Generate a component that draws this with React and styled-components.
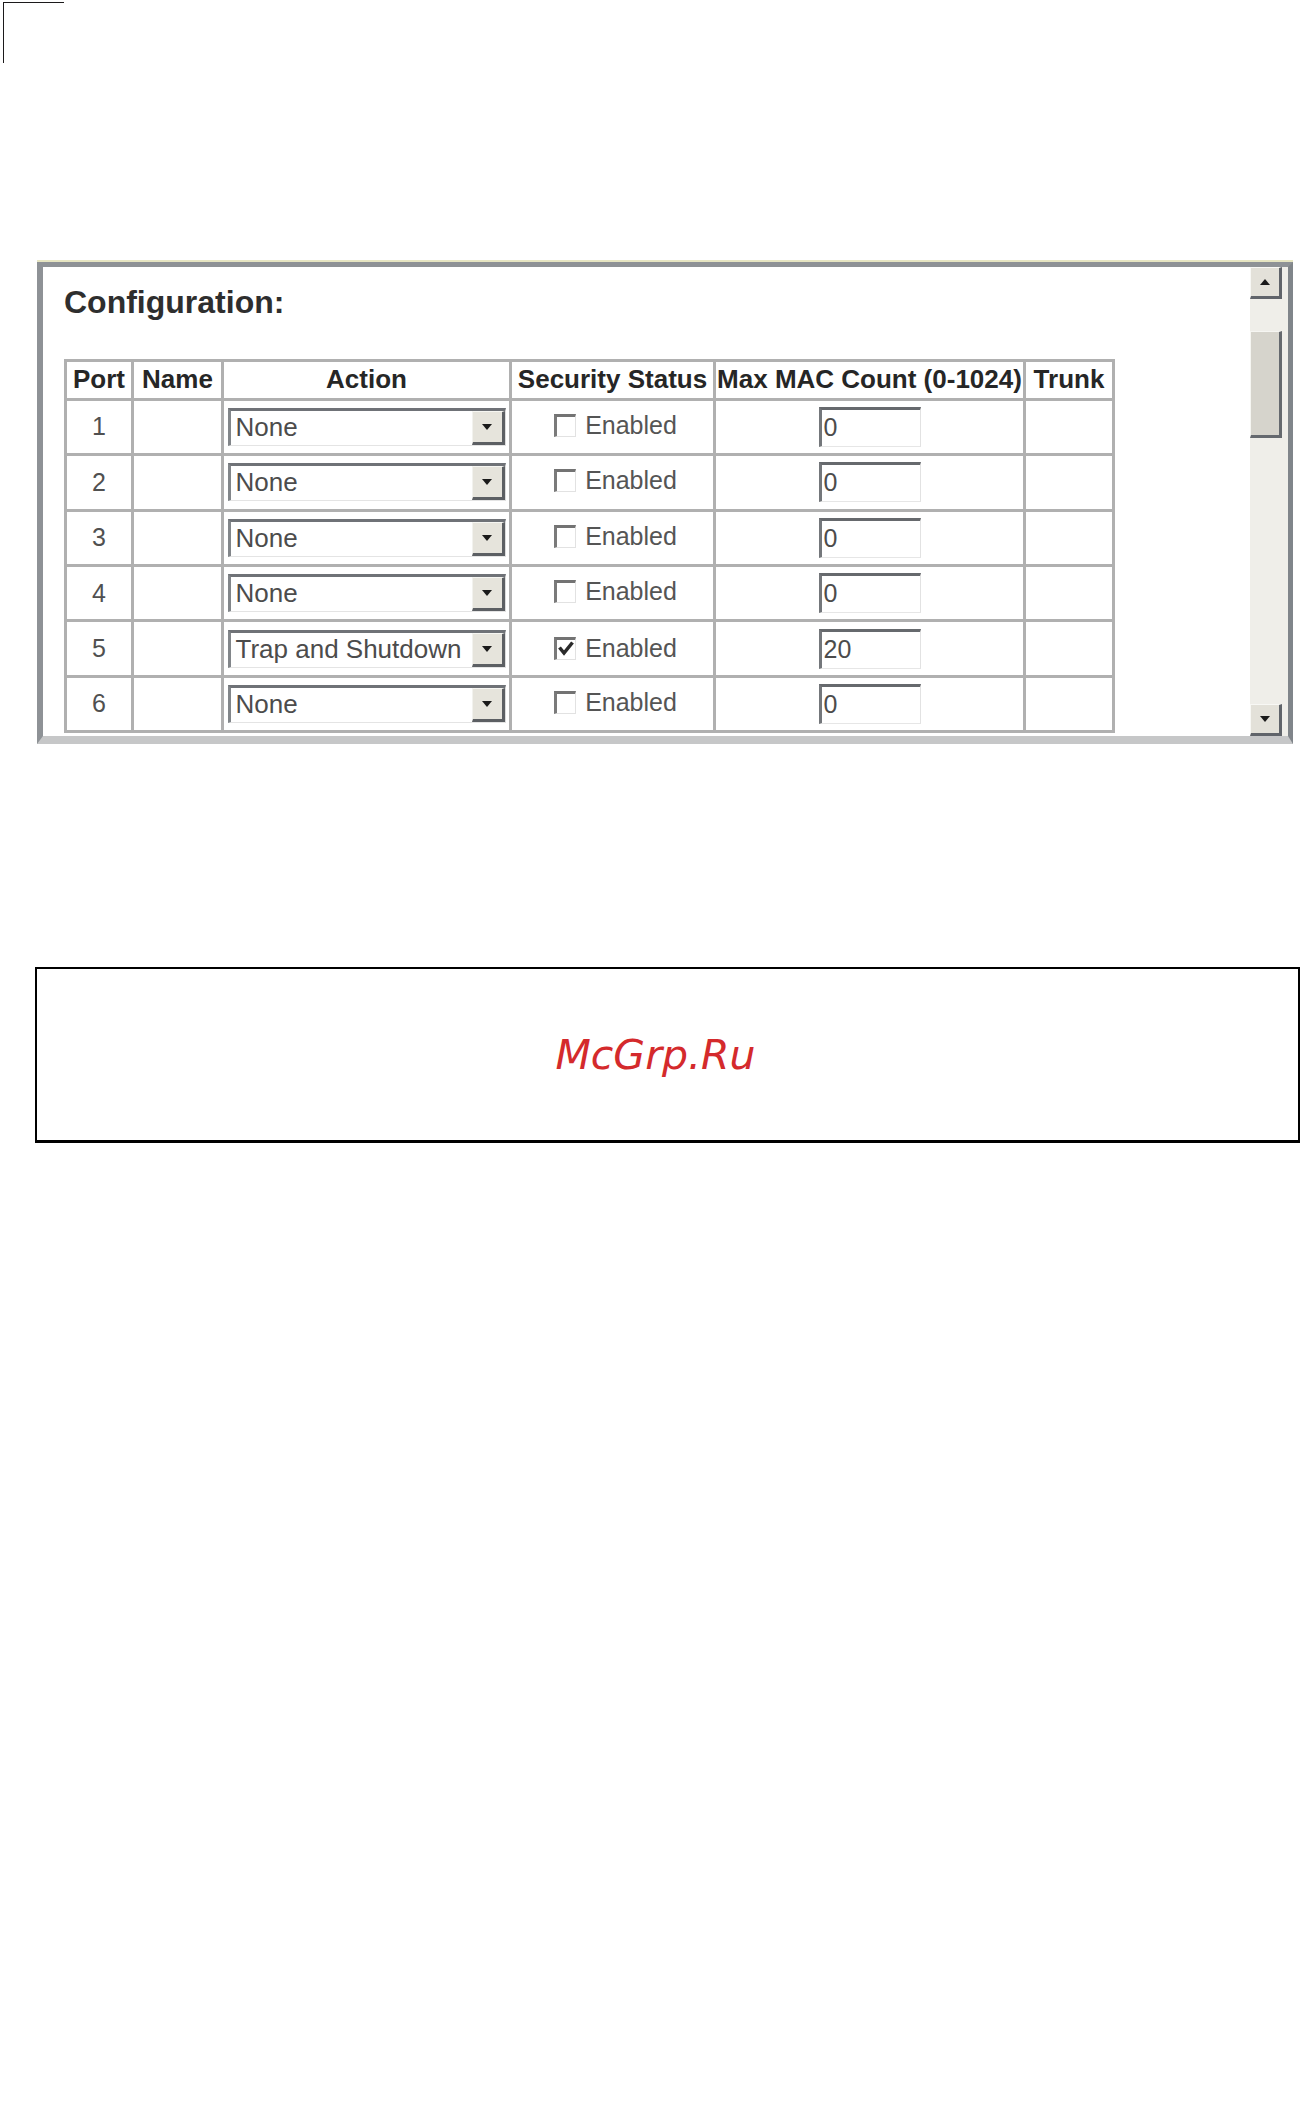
import React from "react"
import styled, { createGlobalStyle } from "styled-components"

const GlobalStyle = createGlobalStyle`
  html, body {
    margin: 0;
    padding: 0;
    background: #ffffff;
  }
  body {
    font-family: "Liberation Sans", Arial, sans-serif;
  }
`

const Page = styled.div`
  width: 1300px;
  min-height: 2107px;
  background: #ffffff;
  overflow: hidden;
`

const CornerMark = styled.div`
  width: 60px;
  height: 60px;
  margin: 2px 0 0 3px;
  border-top: 1px solid #1c1a1b;
  border-left: 1px solid #1c1a1b;
`

const Frame = styled.div`
  display: flex;
  width: 1256px;
  height: 482px;
  box-sizing: border-box;
  margin: 199px 0 0 37px;
  border-top: 5px solid #8e9296;
  border-left: 6px solid #8e9296;
  border-right: 5px solid #80858a;
  border-bottom: 8px solid #c6c7c8;
  box-shadow: 0 -2px 0 #e6e5c2;
  background: #ffffff;
`

const Content = styled.div`
  flex: 1;
  overflow: hidden;
  padding: 17px 0 0 21px;
`

const Title = styled.h2`
  margin: 0 0 38px;
  font-family: "Liberation Sans", Arial, sans-serif;
  font-size: 32px;
  font-weight: bold;
  color: #2e2e2e;
  line-height: 1.15;
`

const Table = styled.table`
  border-collapse: collapse;
  table-layout: fixed;
  width: 1048px;
`

const Col = styled.col`
  width: ${(p) => p.$w}px;
`

const HeadCell = styled.th`
  height: 36px;
  padding: 0;
  border: 3px solid #b0b0b0;
  font-size: 26px;
  font-weight: bold;
  color: #262626;
  text-align: center;
  white-space: nowrap;
  overflow: hidden;
`

const Cell = styled.td`
  height: 52.4px;
  padding: 0;
  border: 3px solid #b0b0b0;
  font-size: 25px;
  color: #505050;
  text-align: center;
  white-space: nowrap;
`

const Select = styled.div`
  display: inline-flex;
  align-items: stretch;
  width: 278px;
  height: 38px;
  box-sizing: border-box;
  border-top: 3px solid #6f7277;
  border-left: 3px solid #82868a;
  border-right: 1px solid #dcdcdc;
  border-bottom: 1px solid #e4e4e4;
  background: #ffffff;
  vertical-align: middle;
`

const SelectValue = styled.span`
  flex: 1;
  padding-left: 5px;
  font-size: 26px;
  line-height: 32px;
  color: #4c4c4c;
  text-align: left;
  overflow: hidden;
`

const DropButton = styled.span`
  display: flex;
  align-items: center;
  justify-content: center;
  width: 29px;
  background: #e6e4dc;
  border-top: 1px solid #f6f6f2;
  border-left: 1px solid #f2f2ee;
  border-right: 3px solid #5c5f63;
  border-bottom: 3px solid #5c5f63;
`

const ArrowDown = styled.span`
  width: 0;
  height: 0;
  border-left: 5px solid transparent;
  border-right: 5px solid transparent;
  border-top: 6px solid #1a1a1a;
`

const ArrowUp = styled.span`
  width: 0;
  height: 0;
  border-left: 5px solid transparent;
  border-right: 5px solid transparent;
  border-bottom: 6px solid #1a1a1a;
`

const CheckLabel = styled.label`
  display: inline-flex;
  align-items: center;
  gap: 9px;
  font-size: 25px;
  color: #555555;
  margin-left: 6px;
`

const CheckBox = styled.span`
  display: inline-flex;
  align-items: center;
  justify-content: center;
  width: 22px;
  height: 23px;
  box-sizing: border-box;
  border-top: 3px solid #737373;
  border-left: 3px solid #7a7a7a;
  border-right: 1px solid #e2e2e2;
  border-bottom: 1px solid #e2e2e2;
  background: #ffffff;
`

const NumberInput = styled.div`
  display: inline-block;
  width: 102px;
  height: 40px;
  box-sizing: border-box;
  border-top: 3px solid #66696d;
  border-left: 3px solid #74777b;
  border-right: 1px solid #e2e2e2;
  border-bottom: 1px solid #e6e6e6;
  padding-left: 2px;
  font-size: 25px;
  line-height: 34px;
  color: #4c4c4c;
  text-align: left;
  vertical-align: middle;
`

const ScrollTrack = styled.div`
  display: flex;
  flex-direction: column;
  width: 32px;
  padding-right: 6px;
  background: #efeee9;
`

const ScrollButton = styled.div`
  display: flex;
  align-items: center;
  justify-content: center;
  height: 33px;
  box-sizing: border-box;
  margin-top: ${(p) => p.$mt || 0}px;
  background: #e3e1d9;
  border-top: 1px solid #f8f8f5;
  border-left: 1px solid #f8f8f5;
  border-right: 3px solid #60646a;
  border-bottom: 3px solid #60646a;
`

const Thumb = styled.div`
  height: 112px;
  box-sizing: border-box;
  margin-top: 32px;
  background: #d6d4cc;
  border-top: 1px solid #f6f6f2;
  border-left: 1px solid #f6f6f2;
  border-right: 3px solid #65696e;
  border-bottom: 3px solid #65696e;
`

const NoticeBox = styled.div`
  display: flex;
  align-items: center;
  justify-content: center;
  width: 1265px;
  height: 176px;
  box-sizing: border-box;
  margin: 223px 0 0 35px;
  padding: 0 24px 0 0;
  border: 2px solid #000000;
  border-bottom-width: 3px;
`

const NoticeText = styled.span`
  font-family: "DejaVu Sans", "Liberation Sans", sans-serif;
  font-style: italic;
  font-size: 41px;
  color: #d42a2c;
`

const columns = [
  { label: "Port", w: 67 },
  { label: "Name", w: 90 },
  { label: "Action", w: 288 },
  { label: "Security Status", w: 204 },
  { label: "Max MAC Count (0-1024)", w: 310 },
  { label: "Trunk", w: 89 },
]

const ports = [
  { port: 1, action: "None", enabled: false, max: "0" },
  { port: 2, action: "None", enabled: false, max: "0" },
  { port: 3, action: "None", enabled: false, max: "0" },
  { port: 4, action: "None", enabled: false, max: "0" },
  { port: 5, action: "Trap and Shutdown", enabled: true, max: "20" },
  { port: 6, action: "None", enabled: false, max: "0" },
]

const CheckMark = () => (
  <svg width="16" height="16" viewBox="0 0 16 16">
    <polyline points="1.5,6.5 6,12 14.5,1.5" fill="none" stroke="#2a2a2a" strokeWidth="3.5" />
  </svg>
)

const PortRow = ({ row }) => (
  <tr>
    <Cell>{row.port}</Cell>
    <Cell />
    <Cell>
      <Select>
        <SelectValue>{row.action}</SelectValue>
        <DropButton>
          <ArrowDown />
        </DropButton>
      </Select>
    </Cell>
    <Cell>
      <CheckLabel>
        <CheckBox>{row.enabled && <CheckMark />}</CheckBox>
        Enabled
      </CheckLabel>
    </Cell>
    <Cell>
      <NumberInput>{row.max}</NumberInput>
    </Cell>
    <Cell />
  </tr>
)

const App = () => (
  <Page>
    <GlobalStyle />
    <CornerMark />
    <Frame>
      <Content>
        <Title>Configuration:</Title>
        <Table>
          <colgroup>
            {columns.map((c) => (
              <Col key={c.label} $w={c.w} />
            ))}
          </colgroup>
          <thead>
            <tr>
              {columns.map((c) => (
                <HeadCell key={c.label}>{c.label}</HeadCell>
              ))}
            </tr>
          </thead>
          <tbody>
            {ports.map((row) => (
              <PortRow key={row.port} row={row} />
            ))}
          </tbody>
        </Table>
      </Content>
      <ScrollTrack>
        <ScrollButton>
          <ArrowUp />
        </ScrollButton>
        <Thumb />
        <ScrollButton $mt={266}>
          <ArrowDown />
        </ScrollButton>
      </ScrollTrack>
    </Frame>
    <NoticeBox>
      <NoticeText>McGrp.Ru</NoticeText>
    </NoticeBox>
  </Page>
)

export default App
